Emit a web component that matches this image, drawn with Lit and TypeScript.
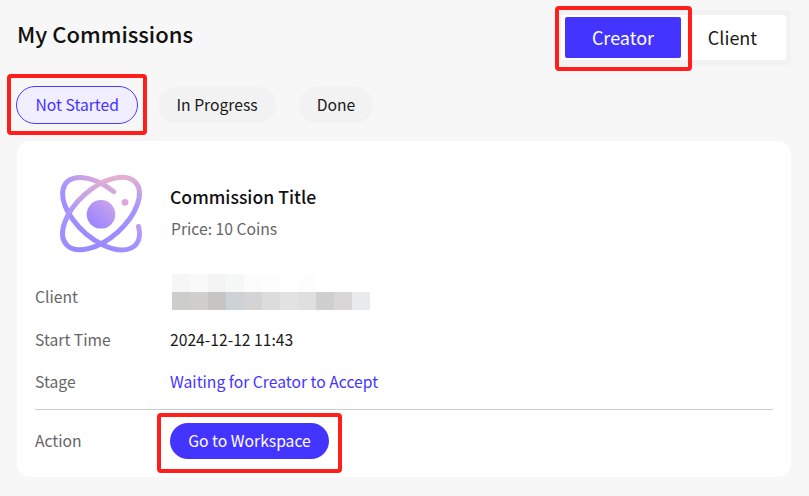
import { LitElement, html, css } from 'lit';
import { customElement, state } from 'lit/decorators.js';

/** Blurred client name, one colour per cell (null leaves the cell blank) */
const MOSAIC: (string | null)[] = [
  '#f6f6f6', '#f9f9f9', '#f4f4f4', '#f6f8f8', '#fcfcfc', '#fcfdfd', '#ffffff', '#fdfdfd', null, null, null,
  '#cdcdcb', '#d0cfcd', '#c6c5c3', '#cdd2d6', '#d4d4d4', '#dcdcdc', '#e2e2e2', '#dfdfdf', '#cfcfcf', '#d8d6d7', '#e9eaec',
];

const TABS = ['Not Started', 'In Progress', 'Done'];

@customElement('app-root')
export class AppRoot extends LitElement {
  @state()
  private activeTab = 0;

  static override styles = css`
    :host {
      display: block;
      height: 496px;
      box-sizing: border-box;
      padding: 10px 18px 0 17px;
      background: #f7f7f7;
      color: #1a1a1a;
      font-family: 'Noto Sans CJK SC', 'Noto Sans', sans-serif;
      font-size: 15.7px;
      overflow: hidden;
    }

    .header {
      display: flex;
      justify-content: space-between;
      align-items: flex-start;
    }

    .page-title {
      margin: 7px 0 0;
      color: #111;
      font-size: 22px;
      line-height: 32px;
      font-weight: 500;
    }

    .role-switch {
      display: flex;
      padding: 5px;
      border-radius: 4px;
      background: #f2f2f2;
    }

    .role-inner {
      display: flex;
      padding: 2px 2px 2px 4px;
      border-radius: 3px;
      background: #fff;
    }

    .role {
      display: flex;
      align-items: center;
      justify-content: center;
      box-sizing: border-box;
      height: 41px;
      padding-bottom: 2px;
      font-size: 18px;
    }

    .role.creator {
      position: relative;
      width: 116px;
      border-radius: 2px;
      background: #4434ff;
      color: #fff;
    }

    .role.client {
      width: 103px;
    }

    .tabs {
      display: flex;
      align-items: center;
      gap: 20px;
      margin: 21px 0 0 -1px;
    }

    .tab {
      display: flex;
      align-items: center;
      box-sizing: border-box;
      height: 36px;
      padding: 0 18px 2px;
      border-radius: 18px;
      background: #f2f2f2;
    }

    .tab:last-child {
      margin-left: 3px;
    }

    .tab.active {
      position: relative;
      height: 38px;
      padding: 0 18.5px 2px;
      border: 1px solid #4a3cff;
      border-radius: 19px;
      background: #f0eeff;
      color: #4434ff;
    }

    .card {
      margin-top: 17px;
      padding: 19px 18px 18px;
      border-radius: 14px;
      background: #fff;
    }

    .summary {
      display: flex;
      height: 100px;
      margin-bottom: 16px;
    }

    .logo {
      width: 120px;
      height: 100px;
      margin: 0 10px 0 5px;
    }

    .summary-text {
      margin-top: 24px;
    }

    .commission-title {
      color: #111;
      font-size: 17.6px;
      line-height: 26px;
      font-weight: 500;
    }

    .price {
      margin: 7px 0 0 1px;
      color: #666;
      line-height: 24px;
    }

    .row {
      display: flex;
      align-items: center;
      height: 42px;
    }

    .label {
      width: 135px;
      flex: none;
      color: #666;
    }

    .label.raised {
      margin-bottom: 2px;
    }

    .mosaic {
      display: grid;
      grid-template-columns: repeat(11, 18px);
      grid-auto-rows: 18px;
      align-self: flex-start;
      margin: -2px 0 0 2px;
    }

    .stage {
      color: #4434ff;
    }

    .divider {
      height: 1px;
      margin-top: 7px;
      background: #ccc;
    }

    .action-row {
      display: flex;
      align-items: center;
      margin-top: 13px;
    }

    .workspace {
      position: relative;
      display: flex;
      align-items: center;
      justify-content: center;
      box-sizing: border-box;
      width: 159px;
      height: 36px;
      padding-bottom: 2px;
      border-radius: 18px;
      background: #4434ff;
      color: #fff;
    }

    /* red annotation frames drawn over the screenshot */
    .mark {
      position: absolute;
      border: 4px solid #ff1f1a;
      border-radius: 4px;
      pointer-events: none;
    }

    .mark-role {
      inset: -11px -11px -13px -10px;
    }

    .mark-tab {
      inset: -13px -10px -12px -10px;
    }

    .mark-action {
      inset: -10px -13px -14px -13px;
    }
  `;

  private renderLogo() {
    return html`
      <svg class="logo" viewBox="0 0 120 100" fill="none" aria-hidden="true">
        <defs>
          <linearGradient id="orbit" gradientUnits="userSpaceOnUse" x1="24" y1="90" x2="80" y2="12">
            <stop offset="0" stop-color="#8f84ff" />
            <stop offset="0.55" stop-color="#a994ff" />
            <stop offset="1" stop-color="#f8b8c2" />
          </linearGradient>
          <linearGradient id="core" gradientUnits="userSpaceOnUse" x1="50" y1="66" x2="74" y2="42">
            <stop offset="0" stop-color="#9783ff" />
            <stop offset="1" stop-color="#cda6ea" />
          </linearGradient>
        </defs>
        <g stroke="url(#orbit)" stroke-width="5" stroke-linecap="round">
          <path d="M73.7 31.6 A46.5 25 42 1 0 98.5 66.3" />
          <ellipse cx="61" cy="53.5" rx="46.5" ry="25" transform="rotate(-42 61 53.5)" />
        </g>
        <circle cx="61" cy="54.3" r="14.3" fill="url(#core)" />
        <circle cx="85" cy="42.3" r="3.4" fill="#dca9dc" />
      </svg>
    `;
  }

  override render() {
    return html`
      <div class="header">
        <h1 class="page-title">My Commissions</h1>
        <div class="role-switch">
          <div class="role-inner">
            <div class="role creator">Creator<span class="mark mark-role"></span></div>
            <div class="role client">Client</div>
          </div>
        </div>
      </div>

      <div class="tabs">
        ${TABS.map(
          (tab, i) => html`
            <div class="tab ${i === this.activeTab ? 'active' : ''}" @click=${() => (this.activeTab = i)}>
              ${tab}${i === this.activeTab ? html`<span class="mark mark-tab"></span>` : ''}
            </div>
          `,
        )}
      </div>

      <div class="card">
        <div class="summary">
          ${this.renderLogo()}
          <div class="summary-text">
            <div class="commission-title">Commission Title</div>
            <div class="price">Price: 10 Coins</div>
          </div>
        </div>

        <div class="row">
          <span class="label raised">Client</span>
          <div class="mosaic">
            ${MOSAIC.map((color) => html`<span style="background:${color ?? 'transparent'}"></span>`)}
          </div>
        </div>
        <div class="row">
          <span class="label">Start Time</span>
          <span>2024-12-12 11:43</span>
        </div>
        <div class="row">
          <span class="label">Stage</span>
          <span class="stage">Waiting for Creator to Accept</span>
        </div>

        <div class="divider"></div>

        <div class="action-row">
          <span class="label raised">Action</span>
          <div class="workspace">Go to Workspace<span class="mark mark-action"></span></div>
        </div>
      </div>
    `;
  }
}
